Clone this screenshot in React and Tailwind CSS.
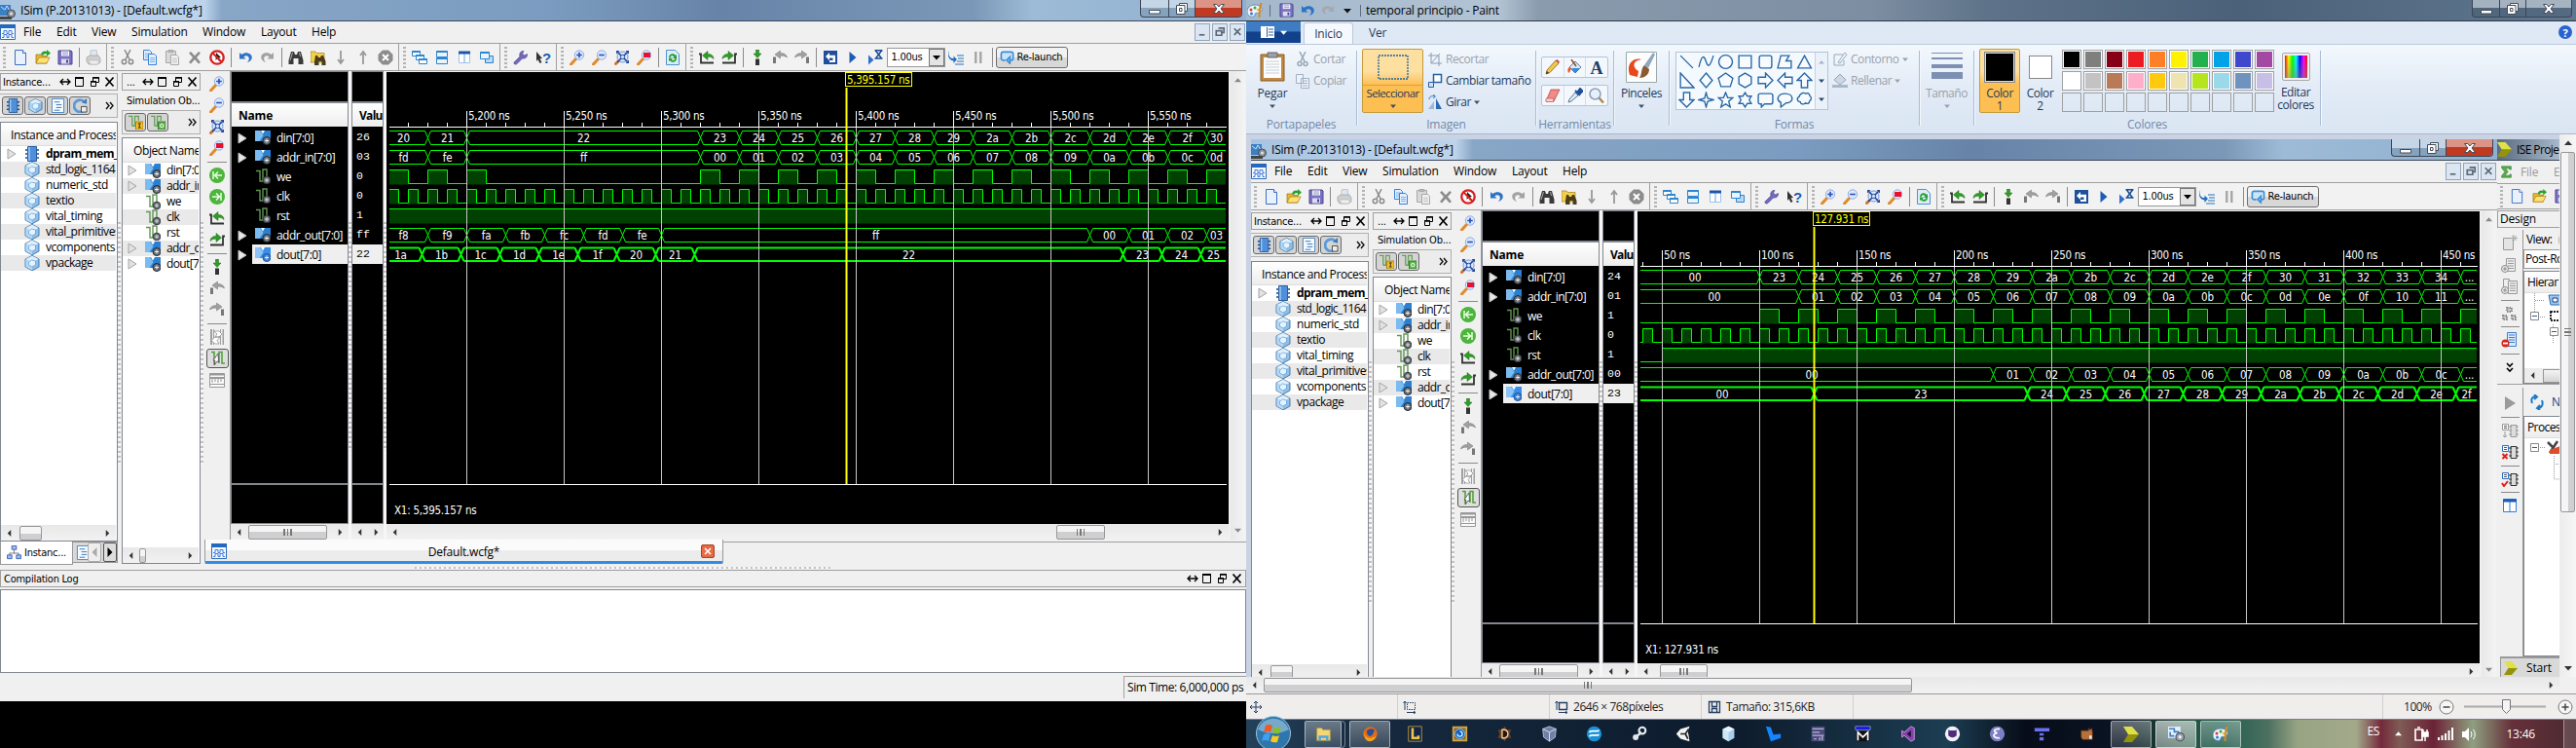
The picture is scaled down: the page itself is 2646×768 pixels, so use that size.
import React from "react";

const SEG = "[font-family:'Open_Sans','Noto_Sans',sans-serif] text-[12px] tracking-[-0.2px] whitespace-nowrap leading-none";
const LST = "[font-family:'Open_Sans','Noto_Sans',sans-serif] text-[12px] tracking-[-0.6px] whitespace-nowrap leading-none";
const RIB = "[font-family:'Open_Sans','Noto_Sans',sans-serif] text-[12px] tracking-[-0.45px] whitespace-nowrap leading-none";
const TAH = "[font-family:'DejaVu_Sans_Condensed','DejaVu_Sans',sans-serif] [font-stretch:condensed] text-[11px] tracking-[-0.25px] whitespace-nowrap leading-none";

/* ---------- icons (16 x 16 grid) ---------- */
const G = "#9a9a9a";
const draw = {
  newdoc: <><path d="M2.500 .5h8l3 3v12h-11z" fill="#e8f1fd" stroke="#3b6fc4" /><path d="M10.500 .5v3h3" fill="#fff" stroke="#3b6fc4" /></>,
  open: <><path d="M1 5h5l1 1.500h5V14H1z" fill="#e8b830" stroke="#9a7412" strokeWidth=".7" /><path d="M1 14l3-6h11l-3 6z" fill="#ffe173" stroke="#a07b14" strokeWidth=".7" /><path d="M6 5c1-3.500 4-4 6-3V0l4 3.500-4 3.500V4.500c-2-.5-3 0-4 1.500z" fill="#27a32b" /></>,
  save: <><path d="M1 1h13l1 1v13H1z" fill="#7a73c4" stroke="#4b468c" /><path d="M4 1.500h8v5H4z" fill="#fff" /><path d="M5 3h6M5 5h6" stroke="#8d8dc0" /><path d="M4 9.500h8v5H4z" fill="#dcdcf2" /><path d="M9 10.500h2v3H9z" fill="#4b468c" /></>,
  print: <><path d="M5 1l6-1 1 7H5z" fill="#dce8f4" stroke="#a8b4c0" strokeWidth=".7" /><path d="M1 8l3-2h9l2 3v4l-3 2H3l-2-3z" fill="#cfcfcf" stroke="#9e9e9e" strokeWidth=".7" /><path d="M3 11l9 0 2 3-3 1H5z" fill="#eee" stroke="#aaa" strokeWidth=".5" /></>,
  cut: <g fill="none" stroke="#8a8a8a" strokeWidth="1.500"><path d="M5 0l5 10M11 0L6 10" /><circle cx="4.500" cy="12.500" r="2.200" /><circle cx="11.500" cy="12.500" r="2.200" /></g>,
  copy: <g stroke="#3d80d0"><path d="M1.500 .5h6l2 2v8h-8z" fill="#e4f0ff" /><path d="M3 4h5M3 6h5M3 8h5" stroke="#7db1ea" /><path d="M6.500 4.500h6l2 2v9h-8z" fill="#e4f0ff" /><path d="M8 8.500h5M8 10.500h5M8 12.500h5" stroke="#7db1ea" /></g>,
  paste: <g stroke="#a8a8a8"><path d="M1.500 1.500h10v12h-10z" fill="#d9d9d9" /><path d="M4 .5h5v2H4z" fill="#bbb" /><path d="M6.500 5.500h6l2 2v8h-8z" fill="#f2f2f2" /><path d="M8 9h5M8 11h5M8 13h5" stroke="#c4c4c4" /></g>,
  del: <path d="M2 3.500l2-1.500 4 4.200L12 2l2 1.500L10 8l4 5-2 1.500L8 10l-4 4.500L2 13l4-5z" fill="#8c8c8c" />,
  noentry: <><circle cx="8" cy="8" r="6.700" fill="#fff" stroke="#d81f1f" strokeWidth="2.300" /><path d="M7 3l5 5-2 .3 1.500 3-1.500.7-1.500-3L6.500 11z" fill="#222" /><path d="M3.500 3.500l9 9" stroke="#d81f1f" strokeWidth="2" /></>,
  undo: <path d="M2 3v6.500h6.500L6.300 7.200C9 5.500 12 6.500 11.800 9.500c-.1 1.600-1 2.600-2 3.500 3.200-.8 5-2.700 5-5.300C14.700 3.500 8.500 1.800 4.200 5z" fill="#2b73c7" />,
  redo: <path d="M14 3v6.500H7.500l2.200-2.300C7 5.500 4 6.500 4.200 9.500c.1 1.600 1 2.600 2 3.500-3.200-.8-5-2.700-5-5.300C1.300 3.500 7.500 1.800 11.800 5z" fill="#a2a2a2" />,
  binoc: <><path d="M3 2h3l1 3h2l1-3h3l2.500 9v4h-5V9h-5v6h-5v-4z" fill="#3a3a3a" /><path d="M4.500 3L2 11M11.500 3l1 4" stroke="#aaa" /></>,
  findf: <><path d="M0 2h5l1.500 1.500H14V13H0z" fill="#f4cf4c" stroke="#a07b14" strokeWidth=".7" /><path d="M5 6h2l1 2h2l1-2h2l2.500 6v4h-4v-4h-3v4H4v-4z" fill="#4a3d1a" /></>,
  down: <path d="M8 1v12M5 10l3 4 3-4" fill="none" stroke={G} strokeWidth="1.800" />,
  up: <path d="M8 15V3M5 6l3-4 3 4" fill="none" stroke={G} strokeWidth="1.800" />,
  stop: <><path d="M5 .5h6L15.500 5v6L11 15.500H5L.5 11V5z" fill="#8c8c8c" /><path d="M5 5l6 6M11 5l-6 6" stroke="#fff" strokeWidth="2" /></>,
  cascade: <g fill="#fff" stroke="#2d86cf"><path d="M.5 1.500h8v5h-8zM4.500 5.500h8v5h-8zM7.500 9.500h8v5h-8z" /><path d="M.5 2h8M4.500 6h8M7.500 10h8" strokeWidth="2" /></g>,
  tileh: <g fill="#eaf4ff" stroke="#2d86cf"><path d="M2.500 1.500h11v6h-11zM2.500 8.500h11v6h-11z" /><path d="M2.500 2h11M2.500 9h11" strokeWidth="2" /></g>,
  tilev: <g fill="#fff" stroke="#9cc4ea"><path d="M2.500 2.500h5.500v11H2.500zM8 2.500h5.500v11H8z" /><path d="M2 3h12" stroke="#1a57a8" strokeWidth="3" /></g>,
  layer: <g fill="#eaf4ff" stroke="#2d86cf"><path d="M6.500 6.500h8v7h-8z" fill="#bcd9f2" /><path d="M1.500 2.500h9v7h-9z" /><path d="M1.500 3h9" strokeWidth="2" /></g>,
  wrench: <path d="M2 15c-1.500-.5-1.500-2 0-3l5-5C6 4 8 1 11 1.500L9.500 4l2 2L14.500 4.500C15 8 12 9.500 9.500 9l-5 5c-1 1-1.500 1.200-2.500 1z" fill="#7169bd" stroke="#474089" strokeWidth=".6" />,
  help: <><path d="M1 2l6 7-2.500.3 2 3.700-2 1-2-4L1 12z" fill="#333" /><text x="7" y="13.500" fontSize="15" fontWeight="bold" fill="#1c5fb0" fontFamily="Liberation Sans">?</text></>,
  zin: <><path d="M6.500 9.500L1.500 15" stroke="#e08a2c" strokeWidth="3" strokeLinecap="round" /><circle cx="10" cy="5.500" r="4.700" fill="#dbe9fd" stroke="#93abe0" /><path d="M10 2.700v5.600M7.200 5.500h5.600" stroke="#2750b8" strokeWidth="1.600" /></>,
  zout: <><path d="M6.500 9.500L1.500 15" stroke="#e08a2c" strokeWidth="3" strokeLinecap="round" /><circle cx="10" cy="5.500" r="4.700" fill="#dbe9fd" stroke="#93abe0" /><path d="M7.200 5.500h5.600" stroke="#2750b8" strokeWidth="1.600" /></>,
  zfit: <><path d="M4 12L1.500 14.500" stroke="#d0732c" strokeWidth="3" strokeLinecap="round" /><circle cx="8.500" cy="7.500" r="5.500" fill="#dbe9fd" stroke="#7290d0" /><path d="M3 2l11 11M14 2L3 13" stroke="#23499c" strokeWidth="1.600" /><circle cx="8.500" cy="7.500" r="2.200" fill="#cfe2fc" stroke="#23499c" /><path d="M2 1h3.500L2 4.500zM15 1h-3.500L15 4.500zM15 14h-3.500L15 10.500z" fill="#23499c" /></>,
  zred: <><path d="M6.500 9.500L1.500 15" stroke="#e08a2c" strokeWidth="3" strokeLinecap="round" /><circle cx="10" cy="5.500" r="4.700" fill="#dbe9fd" stroke="#93abe0" /><path d="M7 3h7v5H7z" fill="#e8102c" /></>,
  refresh: <><path d="M1.500 .5h9l4 4v11h-13z" fill="#dcecfb" stroke="#4f93d2" /><path d="M4 8c0-4 5-5 7-2l1-1v4H8l1.500-1.500C8 5.500 6 6 5.500 8zM12 9c0 4-5 5-7 2l-1 1V8.500h4L6.500 10C8 11.500 10 11 10.500 9z" fill="#23a12b" /></>,
  gleft: <><path d="M0 4.500h2v9h13" fill="none" stroke="#333" strokeWidth="1.800" /><path d="M3.500 6L9 1.500v3c4 0 6 2 6 5-2-2-4-2.500-6-2v3z" fill="#2f9d27" stroke="#1c6b17" strokeWidth=".5" /></>,
  gright: <><path d="M16 4.500h-2v9H1" fill="none" stroke="#333" strokeWidth="1.800" /><path d="M12.500 6L7 1.500v3c-4 0-6 2-6 5 2-2 4-2.500 6-2v3z" fill="#2f9d27" stroke="#1c6b17" strokeWidth=".5" /></>,
  gdown: <><path d="M6.500 0h3v4H12L8 8.500 4 4h2.500z" fill="#2f9d27" stroke="#1c6b17" strokeWidth=".5" /><path d="M6 9.500h4V16H6z" fill="#333" /></>,
  mleft: <><path d="M1 7.500h3V14H1z" fill="#777" /><path d="M3 5L8.500 1v2.500c4 0 6.500 1.500 7 4.500-2-1.500-4-2-7-1.800V9z" fill="#a0a0a0" stroke="#777" strokeWidth=".5" /></>,
  mright: <><path d="M12 7.500h3V14h-3z" fill="#777" /><path d="M13 5L7.500 1v2.500C3.500 3.500 1 5 .5 8c2-1.500 4-2 7-1.800V9z" fill="#a0a0a0" stroke="#777" strokeWidth=".5" /></>,
  restart: <><path d="M1 1h14v14H1z" fill="#1d4f9c" /><path d="M3 7l4-4v2.700h6V13H7v-2h3.500V8.500H7V11z" fill="#fff" /></>,
  play: <path d="M4.500 2l7 6-7 6z" fill="#1d5cb4" />,
  playt: <><path d="M1 5.500l5.500 5-5.500 5z" fill="#2f6fd0" /><path d="M7.500 0.700h8M7.500 9h8M8.500 1l6 8M14.500 1l-6 8" stroke="#174e95" strokeWidth="1.500" /></>,
  step: <><path d="M1 1c-1.500 4 0 8 4.500 8V6.500L9 10l-3.500 4v-2.500C1 11-2 6 1 1z" fill="#2270c0" /><path d="M9 6h7M10 9h6M9 12h7M7 15h9" stroke="#2270c0" /></>,
  pause: <path d="M4 2h2.500v12H4zM9 2h2.500v12H9z" fill="#a8a8a8" />,
  relaunch: <path d="M6 11.500H3.500a2 2 0 0 1-2-2v-5a2 2 0 0 1 2-2h9a2 2 0 0 1 2 2v5a2 2 0 0 1-2 2H11M11 8v7L7.500 11.500z" fill="#cce4f8" stroke="#3c8ed6" strokeWidth="1.800" />,
  gostart: <><circle cx="8" cy="8" r="8" fill="#4db53c" /><path d="M4 4v8M13 8H6M9 4.500L5.500 8 9 11.500" fill="none" stroke="#e8ffe2" strokeWidth="1.500" /></>,
  goend: <><circle cx="8" cy="8" r="8" fill="#4db53c" /><path d="M12 4v8M3 8h7M7 4.500L10.500 8 7 11.500" fill="none" stroke="#e8ffe2" strokeWidth="1.500" /></>,
  swap: <g fill="#a0a0a0"><path d="M1 0h2v16H1zM4 0h1v16H4zM11 0h1v16h-1zM13.500 0H15v16h-1.500z" /><path d="M5 2h5l3 3-3 3H6l2-3zM11 8H6l-4 3.500L6 15h4l-2-3.500z" fill="#fff" stroke="#888" strokeWidth=".7" /></g>,
  snap: <><path d="M2 1.500h3V13h2M10 13V1.500h3V13h3" fill="none" stroke="#4f9e3a" strokeWidth="1.500" /><path d="M9 3L4 10l2 .3L5 15l3-4 1.500.5z" fill="#fff" stroke="#444" strokeWidth=".8" /></>,
  ruler: <><path d="M.5 1.500h15v14H.5z" fill="#fafafa" stroke="#999" /><path d="M.5 2.500h15M.5 6h15" stroke="#999" strokeWidth="2" /><path d="M3 7v4M6 7v3M9 7v4M12 7v3M.5 12.500h15" stroke="#999" /></>,
  chip: <><path d="M1 4h14M1 8h14M1 12h14" stroke="#1b4b86" strokeWidth="1.500" /><path d="M3.500 .5h9v15h-9z" fill="#4f8fdb" stroke="#2c5f9f" /><path d="M5 1v14" stroke="#9cc8f5" strokeWidth="1.500" /></>,
  cube: <><path d="M8 .5L15 4v8l-7 3.800L1 12V4z" fill="#8fbfea" stroke="#40739f" strokeWidth=".9" /><path d="M8 .8L14.500 4 8 7.500 1.500 4z" fill="#dff0ff" /><path d="M8 7.500v8L1.500 12V4z" fill="#b4d8f6" /><path d="M4.500 7l3-2 4 1v4l-3.500 2-3.500-2z" fill="#e4f3ff" stroke="#5f9bd0" strokeWidth=".7" /></>,
  doclist: <><path d="M1.500 .5h13v15h-13z" fill="#f6fbff" stroke="#4a84bd" /><path d="M4 4h6M6 7h6M6 10h6M4 13h6" stroke="#3672b5" /></>,
  circ: <><path d="M12 3.500A6.500 6.500 0 1 0 13 12" fill="none" stroke="#5a9bd8" strokeWidth="3" /><path d="M9.500 4.500L15 6V0z" fill="#3c7cbc" /><path d="M9 9h6v6H9z" fill="#eee" stroke="#444" /></>,
  sigI: <><path d="M0 1.500h4V12M4 12h3V1.500h4V6" fill="none" stroke="#6aa05a" strokeWidth="1.400" /><path d="M8 7.500h8V16H8z" fill="#f8c224" stroke="#a87b10" /><path d="M10.500 9.500h3M12 9.500v4M10.500 13.800h3" stroke="#222" /></>,
  sigO: <><path d="M0 1.500h4V12M4 12h3V1.500h4V6" fill="none" stroke="#6aa05a" strokeWidth="1.400" /><path d="M8 7.500h8V16H8z" fill="#5dbb4b" stroke="#2d7a22" /><circle cx="12" cy="11.800" r="1.800" fill="none" stroke="#fff" /></>,
  bus: <><path d="M0 1h16v11H0z" fill="#2a7fd0" /><path d="M0 1h5l3.500 5-4 6H0z" fill="#7bbcf0" /><path d="M6 1h4L8 4.500z" fill="#fff" /><circle cx="12" cy="11.500" r="4" fill="#6b6f78" stroke="#222831" /><path d="M12 9.500v4M10 11.500h4" stroke="#eee" /></>,
  bussel: <><path d="M0 1h16v11H0z" fill="#3a8fe8" /><path d="M0 1h5l3.500 5-4 6H0z" fill="#8cc4f8" /><path d="M6 1h4L8 4.500z" fill="#fff" /><circle cx="12" cy="11.500" r="4" fill="#3f7fd0" stroke="#1e56a0" /><path d="M12 9.500v4M10 11.500h4" stroke="#dcecff" /></>,
  sig: <><path d="M1 2.500h4V13h3V1h4v8" fill="none" stroke="#5f9550" strokeWidth="1.400" /><circle cx="12" cy="12" r="3.800" fill="#6b6f78" stroke="#33363c" /><path d="M12 10v4M10 12h4" stroke="#ddd" /></>,
  wcfg: <><path d="M.5 .5h15v15H.5z" fill="#f4faff" stroke="#2f6bb5" /><path d="M0 0h16v4H0z" fill="#2469bd" /><path d="M2 9.500h2V6.500h3v3h2v-3h3v3h2M2 13.500h2v-3h3v3h2v-3h3v3h2" fill="none" stroke="#4379d8" /></>,
  isim: <><path d="M0 1h11v11H0z" fill="#3b7fc4" /><path d="M1 3l4 3 2-4 3 5" stroke="#bfe2ff" fill="none" /><circle cx="11.500" cy="10" r="4" fill="#8b9099" stroke="#454a52" /><circle cx="11.500" cy="10" r="1.600" fill="#ddd" /><path d="M0 13h12v3H0z" fill="#444" /></>,
  isimBig: <><path d="M0 1h12v11H0z" fill="#e6f1fb" /><path d="M1 3h5v3h4v4M2 6v4h4" stroke="#3b7fc4" strokeWidth="1.500" fill="none" /><circle cx="11.500" cy="11" r="4" fill="#9aa0a8" stroke="#454a52" /><circle cx="11.500" cy="11" r="1.600" fill="#eee" /></>,
  tree: <g stroke="#3b62b5"><path d="M8 5v4M3 11V8.500h10V11" fill="none" stroke="#777" /><path d="M5.500 .5h5v4h-5zM.5 10.500h5v4h-5zM10.500 10.500h5v4h-5z" fill="#9fbdf2" /></g>,
  sigma: <path d="M2 1h12v4h-2L11 3.500H7L10 8l-4 4.500h5L13 11h1v4H2v-2l4-5-4-5z" fill="#5aae4c" stroke="#26742b" strokeWidth=".7" />,
  chev: <><path d="M0 0h9l7 8H5z" fill="#dfe04a" /><path d="M0 16h9l7-8H5z" fill="#93930c" /></>,
  palette: <><path d="M8 2C3 2 0 5 0 9s4 6 7 5c2-.7 0-3 2-3.500s5 .5 6-3S12 2 8 2z" fill="#eef4fb" stroke="#5b8dbd" /><circle cx="4" cy="7" r="1.500" fill="#e03c31" /><circle cx="8" cy="5" r="1.500" fill="#37a837" /><circle cx="4.500" cy="11" r="1.500" fill="#2c79d6" /><circle cx="11" cy="7" r="1.300" fill="#f2c029" /><path d="M14.500 0L13 6l-.5 9" stroke="#d78a26" strokeWidth="2" /></>,
};
const I = ({ n, s = 16, c = "" }) => (
  <svg viewBox="0 0 16 16" width={s} height={s} fill="none" className={"shrink-0 " + c}>{draw[n]}</svg>
);

const Slot = ({ n, s }) => <div className="flex w-[23px] shrink-0 justify-center"><I n={n} s={s || 16} /></div>;
const Sep = () => <div className="flex w-[6px] shrink-0 justify-center"><div className="h-5 w-px bg-[#8a8a8a]" /></div>;
const Grip = () => <div className="h-[22px] w-[3px] shrink-0 bg-[repeating-linear-gradient(to_bottom,#b4b4b4_0px,#b4b4b4_2px,#f0f0f0_2px,#f0f0f0_4px)]" />;
const Break = () => <div className="flex w-3 shrink-0 items-center gap-1"><div className="ml-px h-[28px] w-px bg-[#a0a0a0]" /><Grip /></div>;
const DotsV = ({ h = "h-[250px]" }) => (
  <div className="w-[4px] shrink-0 pt-[155px]">
    <div className={"w-[3px] bg-[repeating-linear-gradient(to_bottom,#c2c2c2_0px,#c2c2c2_2px,#fafafa_2px,#f0f0f0_5px)] " + h} />
  </div>
);

const Tri = ({ d = "r", c = "#333", s = 5, cls = "" }) => (
  <svg width={s + 2} height={s + 2} viewBox="0 0 8 8" className={"shrink-0 " + cls}>
    <path fill={c} d={{ r: "M2 0l4 4-4 4z", l: "M6 0L2 4l4 4z", d: "M0 2h8L4 6.500z", u: "M0 6h8L4 1.500z" }[d]} />
  </svg>
);
/* expander in front of tree rows */
const Exp = ({ light, cls = "" }) => (
  <svg width="10" height="12" viewBox="0 0 10 12" className={"shrink-0 " + cls}>
    <path d="M1 1l8 5-8 5z" fill={light ? "#e2e2e2" : "#e8e8e8"} stroke={light ? "#a4a4a4" : "#bdbdbd"} />
  </svg>
);
const Thumb = ({ w, grip }) => (
  <div className="flex h-[15px] shrink-0 items-center justify-center gap-px rounded-[2px] border border-[#979797] bg-linear-to-b from-[#f5f5f5] from-50% to-[#cfcfd2] to-50%" style={{ width: w }}>
    {grip && [0, 1, 2].map((i) => <div key={i} className="mx-[0.5px] h-[7px] w-[1.500px] bg-[#777]" />)}
  </div>
);
const HScroll = ({ lead, w, grip, cls = "" }) => (
  <div className={"flex h-[16px] items-center bg-linear-to-b from-[#e8e8e8] to-[#f2f2f2] " + cls}>
    <div className="flex w-[17px] shrink-0 justify-center"><Tri d="l" /></div>
    {w ? <><div style={{ width: lead }} className="shrink-0" /><Thumb w={w} grip={grip} /></> : null}
    <div className="ml-auto flex w-[17px] shrink-0 justify-center"><Tri /></div>
  </div>
);

const DockBtns = () => (
  <svg width="57" height="12" viewBox="0 0 57 12" className="ml-auto shrink-0" fill="none" stroke="#000">
    <path d="M2 6h8M4 3L1 6l3 3M8 3l3 3-3 3" strokeWidth="1.300" />
    <path d="M16.500 1.500h8v9h-8z" /><path d="M16 2h9" strokeWidth="2" />
    <path d="M34.500 1.500h6v5h-6z" fill="#f0f0f0" /><path d="M34 2h7" strokeWidth="1.500" />
    <path d="M32.500 5.500h5v5h-5z" fill="#f0f0f0" /><path d="M32 6h6" strokeWidth="1.500" />
    <path d="M47.500 1.500l8 9M55.500 1.500l-8 9" strokeWidth="1.700" />
  </svg>
);
const Pressed = ({ n }) => (
  <div className="flex h-[19px] w-[22px] items-center justify-center rounded-[3px] border-[1.500px] border-[#6a6a6a] bg-[#d4d4d4]"><I n={n} s={15} /></div>
);
const More = () => <svg width="9" height="9" viewBox="0 0 9 9" className="ml-auto mr-[3px] shrink-0"><path d="M1 1l3 3.500L1 8M5 1l3 3.500L5 8" fill="none" stroke="#111" strokeWidth="1.400" /></svg>;

/* window caption buttons */
const Caption = ({ red, w1 = 29, w2 = 27, w3 = 47 }) => (
  <div className="ml-auto flex h-[18px] self-start overflow-hidden rounded-b-[4px] border border-t-0 border-[#3c4654] bg-linear-to-b from-white/45 from-50% to-black/10 to-50%">
    {[w1, w2, w3].map((w, i) => (
      <div key={i} style={{ width: w }} className={"flex items-center justify-center " + (i < 2 ? "border-r border-[#3c4654] " : red ? "bg-linear-to-b from-[#dc9486] from-45% to-[#c03a22] to-50%" : "")}>
        <svg width="14" height="12" viewBox="0 0 14 12" fill="none">
          {i === 0 && <path d="M1.500 7.500h11v3.500h-11z" fill="#fff" stroke="#444c58" />}
          {i === 1 && <><path d="M4.500 .5h8v8h-8z" fill="#fff" stroke="#444c58" /><path d="M1.500 2.500h8.500v9H1.500z" fill="#fff" stroke="#444c58" /><path d="M4.500 5.500h2.500v3H4.500z" stroke="#444c58" /></>}
          {i === 2 && <path d="M1.500 1.500h3.300L7 4l2.200-2.500h3.300L9 6l3.500 4.500H9.200L7 8l-2.200 2.500H1.500L5 6z" fill="#fff" stroke="#444c58" />}
        </svg>
      </div>
    ))}
  </div>
);

/* ---------- wave form ---------- */
const X0 = 3, XE = 862;
const BusRow = ({ y, segs, thick }) => {
  const top = y, bot = y + 14 - (thick ? 0.5 : 0);
  let d = "";
  segs.forEach(([a, b], i) => {
    const s = Math.max(a, X0) + (a > X0 ? 3 : 0), e = b >= XE ? XE : b - 3;
    d += `M${s} ${top}H${e}M${s} ${bot}H${e}`;
    if (i > 0) d += `M${a - 3} ${top}L${a + 3} ${bot}M${a + 3} ${top}L${a - 3} ${bot}`;
  });
  return (
    <g>
      <path d={d} stroke="#00ff00" strokeWidth={thick ? 2 : 1} fill="none" />
      {segs.map(([a, b, v], i) => (
        <text key={i} x={(a + b) / 2} y={y + 11} textAnchor="middle" fill="#fff" fontSize="11.500" letterSpacing="-0.2">{v}</text>
      ))}
    </g>
  );
};
const DigRow = ({ y, highs }) => {
  let d = "", last = X0;
  highs.forEach(([a, b]) => {
    const s = Math.max(a, X0), e = Math.min(b, XE);
    if (s > last) d += `M${last} ${y + 14}H${s}`;
    if (a > X0) d += `M${s} ${y + 14}V${y}`; else d += `M${s} ${y}`;
    d += `H${e}`;
    if (b < XE) d += `V${y + 14}`;
    last = e;
  });
  if (last < XE) d += `M${last} ${y + 14}H${XE}`;
  return (
    <g>
      {highs.map(([a, b], i) => { const s = Math.max(a, X0); return <rect key={i} x={s} y={y} width={Math.min(b, XE) - s} height="15" fill="#004000" />; })}
      <path d={d} stroke="#00ff00" fill="none" />
    </g>
  );
};
const seq = (from, n, start, step = 40) =>
  Array.from({ length: n }, (_, i) => [start + i * step, start + (i + 1) * step, (from + i).toString(16).padStart(2, "0")]);
const pulses = (start, end, step, w) => {
  const r = [];
  for (let x = start; x < end; x += step) r.push([x, x + w]);
  return r;
};

/* coordinates are relative to the canvas, whose left edge shows x = 397 of the window */
const L = (x) => x - 397 + 0.5;
const shift = (a) => a.map(([s, e, v]) => [L(s), L(e), v]);
const waves = {
  a: {
    grid: [479, 579, 679, 779, 879, 979, 1079, 1179], labels: ["5,200 ns", "5,250 ns", "5,300 ns", "5,350 ns", "5,400 ns", "5,450 ns", "5,500 ns", "5,550 ns"],
    first: 419, cursor: 869, cl: "5,395.157 ns", cw: 68,
    din: shift([[389, 439, "20"], [439, 479, "21"], [479, 719, "22"], ...seq(0x23, 13, 719), [1239, 1259, "30"]]),
    ain: shift([[389, 439, "fd"], [439, 479, "fe"], [479, 719, "ff"], ...seq(0, 13, 719), [1239, 1259, "0d"]]),
    we: shift([[399, 419], [439, 459], [479, 499], ...pulses(719, 1259, 40, 20)]),
    clk: shift(pulses(399, 1259, 20, 10)),
    rst: shift([[390, 1265]]),
    aout: shift([[389, 439, "f8"], ...seq(0xf9, 6, 439), [679, 1119, "ff"], ...seq(0, 3, 1119), [1239, 1259, "03"]]),
    dout: shift([[389, 433, "1a"], ...seq(0x1b, 5, 433), [633, 673, "20"], [673, 713, "21"], [713, 1153, "22"], [1153, 1193, "23"], [1193, 1233, "24"], [1233, 1259, "25"]]),
    vals: ["26", "03", "0", "0", "1", "ff", "22"], lead: 671, thumb: 50,
  },
  b: {
    grid: [422, 522, 622, 722, 822, 922, 1022, 1122, 1222], labels: ["50 ns", "100 ns", "150 ns", "200 ns", "250 ns", "300 ns", "350 ns", "400 ns", "450 ns"],
    first: 402, cursor: 578, cl: "127.931 ns", cw: 58,
    din: shift([[389, 522, "00"], ...seq(0x23, 18, 522), [1242, 1260, "..."]]),
    ain: shift([[389, 562, "00"], ...seq(1, 17, 562), [1242, 1260, "..."]]),
    we: shift(pulses(522, 1259, 40, 20)),
    clk: shift(pulses(402, 1259, 20, 10)),
    rst: shift([[422, 1265]]),
    aout: shift([[389, 762, "00"], ...seq(1, 12, 762), [1242, 1260, "..."]]),
    dout: shift([[389, 578, "00"], [578, 797, "23"], ...seq(0x24, 11, 797), [1237, 1259, "2f"]]),
    vals: ["24", "01", "1", "0", "1", "00", "23"], lead: 6, thumb: 49,
  },
};
const Wave = ({ w }) => {
  const ticks = [];
  for (let x = w.first; x < 1259; x += 20) ticks.push(x);
  return (
    <svg width="865" height="464" viewBox="0 0 865 464" className={"block bg-black " + TAH}>
      <g transform="translate(0,-74)">
        <path d={ticks.map((x) => `M${L(x)} 126V130`).join("")} stroke="#fff" />
        <path d="M3 130.500H863M3 497.500H863" stroke="#fff" />
        {w.grid.map((x, i) => <text key={x} x={L(x) + 1.500} y="122.500" fill="#fff" fontSize="11.500" letterSpacing="-0.3">{w.labels[i]}</text>)}
        <BusRow y={134.5} segs={w.din} /><BusRow y={154.5} segs={w.ain} />
        <DigRow y={174.5} highs={w.we} /><DigRow y={194.5} highs={w.clk} /><DigRow y={214.5} highs={w.rst} />
        <BusRow y={234.5} segs={w.aout} /><BusRow y={254.5} segs={w.dout} thick />
        <path d={w.grid.map((x) => `M${L(x)} 131V497`).join("")} stroke="#c8c8c8" />
        <path d={w.grid.map((x) => `M${L(x)} 114V130`).join("")} stroke="#fff" />
        <rect x={L(w.cursor) - 1} y="74.500" width={w.cw} height="14" fill="#000" stroke="#ff0" />
        <text x={L(w.cursor) + 0.5} y="85.500" fill="#ff0" fontSize="11.500" letterSpacing="-0.3">{w.cl}</text>
        <path d={`M${L(w.cursor)} 90V497`} stroke="#ff0" strokeWidth="2" />
        <text x="8" y="527.500" fill="#fff" fontSize="11.500" letterSpacing="-0.25">X1: {w.cl}</text>
      </g>
    </svg>
  );
};

const nameRows = [["bus", "din[7:0]"], ["bus", "addr_in[7:0]"], ["sig", "we"], ["sig", "clk"], ["sig", "rst"], ["bus", "addr_out[7:0]"], ["bus", "dout[7:0]"]];
const instRows = ["std_logic_1164", "numeric_std", "textio", "vital_timing", "vital_primitives", "vcomponents", "vpackage"];
const HEAD = "flex shrink-0 items-center bg-linear-to-b from-white to-[#ededed]";

const ISim = ({ w }) => (
  <div className="flex h-[720px] w-[1280px] shrink-0 flex-col overflow-hidden bg-[#f0f0f0] text-black">
    <div className="flex h-[22px] shrink-0 items-center border-b border-[#3b4a5c] bg-[linear-gradient(90deg,#a9c4e0_0px,#bdd4ec_210px,#88a6c6_228px,#7b9cc0_560px,#6784a8_740px,#7c98b8_1000px,#9dbbd6_1060px,#8fb0d0_1280px)]">
      <I n="isim" c="mt-0.5" />
      <div className={SEG + " ml-[5px]"}>ISim (P.20131013) - [Default.wcfg*]</div>
      <Caption red />
      <div className="w-1" />
    </div>
    <div className="flex h-[22px] shrink-0 items-center">
      <I n="wcfg" />
      <div className={SEG + " ml-2 flex flex-1"}>
        <div className="w-[34px]">File</div><div className="w-[36px]">Edit</div><div className="w-[41px]">View</div>
        <div className="w-[73px]">Simulation</div><div className="w-[60px]">Window</div><div className="w-[52px]">Layout</div><div>Help</div>
      </div>
      <div className="flex gap-0.5 pr-px">
        {["M4 11h6", "M6 3.500h6v5h-2M3.500 6.500h6v5h-6z", "M4 4l7 7M11 4l-7 7"].map((d) => (
          <div key={d} className="h-[18px] w-[16px] border border-[#8fa5c0] bg-[#dce6f2]"><svg viewBox="0 0 15 16" width="14" height="16"><path d={d} fill="none" stroke="#5a6878" strokeWidth="1.800" /></svg></div>
        ))}
      </div>
    </div>
    <div className="flex h-[29px] shrink-0 items-center border-y border-[#a0a0a0] bg-[#f2f2f2] pl-[3px]">
      <Grip /><div className="w-[3.500px] shrink-0" />
      <Slot n="newdoc" /><Slot n="open" /><Slot n="save" /><Sep /><Slot n="print" /><Break />
      <Slot n="cut" /><Slot n="copy" /><Slot n="paste" /><Slot n="del" /><Slot n="noentry" /><Sep />
      <Slot n="undo" /><Slot n="redo" /><Sep /><Slot n="binoc" /><Slot n="findf" /><Slot n="down" /><Slot n="up" /><Slot n="stop" /><Break />
      <Slot n="cascade" /><Slot n="tileh" /><Slot n="tilev" /><Slot n="layer" /><Break />
      <Slot n="wrench" /><Slot n="help" /><Break />
      <Slot n="zin" /><Slot n="zout" /><Slot n="zfit" /><Slot n="zred" /><Sep /><Slot n="refresh" /><Break />
      <Slot n="gleft" /><Slot n="gright" /><Sep /><Slot n="gdown" /><Slot n="mleft" /><Slot n="mright" /><Sep />
      <Slot n="restart" /><Slot n="play" /><Slot n="playt" />
      <div className="flex h-[20px] w-[60px] shrink-0 items-center border border-[#999] bg-white pl-1">
        <div className={TAH + " flex-1 tracking-[-0.5px]"}>1.00us</div>
        <div className="flex h-[18px] w-[16px] items-center justify-center border border-[#777] bg-[#e4e4e4]"><Tri d="d" c="#000" s={6} /></div>
      </div>
      <Slot n="step" /><Slot n="pause" /><Sep />
      <div className="flex h-[22px] w-[74px] shrink-0 items-center rounded-[3px] border border-[#707070] bg-linear-to-b from-[#f2f2f2] from-50% to-[#d8d8d8] to-50% pl-[3px]">
        <I n="relaunch" s={15} /><div className={TAH + " ml-[3px] tracking-[-0.5px]"}>Re-launch</div>
      </div>
    </div>

    <div className="flex h-[507px] shrink-0">
      {/* instances dock */}
      <div className="flex w-[121px] shrink-0 flex-col pt-[2px]">
        <div className="flex h-[18px] items-center border border-[#a0a0a0] pl-0.5 pr-0.5"><div className={TAH + " tracking-[-0.4px]"}>Instance...</div><DockBtns /></div>
        <div className="mt-[3px] flex h-[25px] items-center gap-px border border-l-0 border-[#b0b0b0] bg-[#ececec] pl-0.5">
          <Pressed n="chip" /><Pressed n="cube" /><Pressed n="doclist" /><Pressed n="circ" /><More />
        </div>
        <div className="mt-[4px] flex h-[431px] flex-col overflow-hidden border border-[#828790] bg-white pr-px">
          <div className={HEAD + " h-[24px] overflow-hidden border-b border-[#ddd] pl-2.5 pt-[2px] " + SEG}><span className="tracking-[-0.4px]">Instance and Processes</span></div>
          <div className="flex h-4 items-center"><Exp light cls="ml-[6px]" /><I n="chip" c="ml-[8px]" /><div className={LST + " ml-[6px] text-[11.500px] font-bold"}>dpram_mem_t</div></div>
          {instRows.map((r, i) => (
            <div key={r} className={"flex h-4 items-center overflow-hidden pl-[24px] " + (i % 2 ? "bg-white" : "bg-[#e9e9e9]")}><I n="cube" /><div className={LST + " ml-[6px] " + (i === 0 ? "tracking-[-0.7px]" : "tracking-[-0.45px]")}>{r}</div></div>
          ))}
          <HScroll lead={2} w={23} cls="mt-auto shrink-0" />
        </div>
        <div className="flex h-[24px] items-center">
          <div className="flex h-full w-[75px] items-center border border-t-0 border-[#999] bg-white pl-1.5"><I n="tree" s={15} /><div className={TAH + " ml-[3px]"}>Instanc...</div></div>
          <div className="flex h-[22px] flex-1 items-center self-start border border-l-0 border-[#999] bg-[#d8d8d8] pl-[3px]">
            <div className="w-[12px] shrink-0 overflow-hidden"><I n="doclist" s={15} /></div>
            <div className="flex h-[20px] w-[14px] items-center justify-center rounded-[2px] border border-[#aaa] bg-[#eee]"><Tri d="l" c="#aaa" s={8} /></div>
            <div className="ml-[2px] flex h-[20px] w-[14px] items-center justify-center rounded-[2px] border border-[#555] bg-[#ddd]"><Tri c="#000" s={8} /></div>
          </div>
        </div>
      </div>
      <DotsV />
      {/* objects dock */}
      <div className="flex w-[81px] shrink-0 flex-col pt-[2px]">
        <div className="flex h-[18px] items-center border border-[#a0a0a0] pl-1 pr-0.5"><div className={TAH}>...</div><DockBtns /></div>
        <div className="flex h-[20px] items-center overflow-hidden pl-[5px]"><div className={TAH + " tracking-[-0.5px]"}>Simulation Ob...</div></div>
        <div className="flex h-[25px] items-center gap-px border border-[#b0b0b0] bg-[#ececec] pl-0.5">
          <Pressed n="sigI" /><Pressed n="sigO" /><More />
        </div>
        <div className="mt-[3px] flex h-[438px] flex-col overflow-hidden border border-[#828790] bg-white pr-px">
          <div className={HEAD + " h-[25px] overflow-hidden border-b border-[#ddd] pl-[11px] pt-px " + SEG}><span className="tracking-[-0.4px]">Object Name</span></div>
          {nameRows.map(([ic, n], i) => (
            <div key={n} className={"flex h-4 items-center overflow-hidden " + (i % 2 ? "bg-[#e9e9e9]" : "bg-white")}>
              <div className="w-[23px] shrink-0 pl-[5px]">{ic === "bus" && <Exp light />}</div><I n={ic} /><div className={LST + " ml-[6px]"}>{n}</div>
            </div>
          ))}
          <HScroll lead={0} w={7} cls="mt-auto shrink-0" />
        </div>
      </div>
      <DotsV />
      {/* wave editor */}
      <div className="flex w-[1070px] shrink-0 flex-col">
        <div className="flex h-[481px]">
          <div className="flex w-[27px] shrink-0 flex-col items-center border-r border-[#999] pt-[2px]">
            {["zin", "zout", "zfit", "zred", "-", "gostart", "goend", "gleft", "gright", "-", "gdown", "mleft", "mright", "-", "swap", "!snap", "ruler"].map((n, i) =>
              n === "-" ? <div key={i} className="flex h-[6px] items-center"><div className="h-px w-5 bg-[#8a8a8a]" /></div>
                : <div key={i} className="flex h-[22px] items-center">
                  {n[0] === "!" ? <div className="flex h-[20px] w-[23px] items-center justify-center rounded-[3px] border-[1.500px] border-[#555] bg-[#dedede]"><I n="snap" /></div> : <I n={n} />}
                </div>)}
          </div>
          {/* names */}
          <div className="flex w-[121px] shrink-0 flex-col">
            <div className="flex h-[465px] flex-col border border-[#828790] bg-black">
              <div className="h-[32px] shrink-0 border-b-2 border-[#828790]" />
              <div className={HEAD + " mb-px h-[24px] pl-[7px] pt-[2px] font-bold " + SEG}>Name</div>
              {nameRows.map(([ic, n], i) => (
                <div key={n} className="flex h-5 shrink-0 items-center">
                  <div className="flex w-[21px] shrink-0 justify-center pt-[2px]">{ic === "bus" && <Exp />}</div>
                  <div className={"flex h-5 flex-1 items-center pl-[3px] " + (i === 6 ? "bg-[#efefef] text-black" : "text-white")}><I n={i === 6 ? "bussel" : ic} /><div className={LST + " ml-[6px] pt-px tracking-[-0.55px]"}>{n}</div></div>
                </div>
              ))}
              <div className="h-[227px] shrink-0 border-b-2 border-[#828790]" />
            </div>
            <HScroll lead={1} w={81} grip />
          </div>
          <div className="w-[3px] shrink-0 bg-[#f6f6f6] pt-[155px]"><div className="h-[235px] w-[3px] bg-[repeating-linear-gradient(to_bottom,#c2c2c2_0px,#c2c2c2_2px,#fafafa_2px,#f0f0f0_5px)]" /></div>
          <div className="flex w-[33px] shrink-0 flex-col">
            <div className="flex h-[465px] flex-col overflow-hidden border border-[#828790] bg-black">
              <div className="h-[32px] shrink-0 border-b-2 border-[#828790]" />
              <div className={HEAD + " mb-px h-[24px] overflow-hidden pl-[7px] pt-[2px] font-bold " + SEG}><span className="tracking-[-0.7px]">Valu</span></div>
              {w.vals.map((v, i) => (
                <div key={i} className={"flex h-5 shrink-0 items-center pl-[4px] [font-family:'Liberation_Mono',monospace] text-[11.500px] leading-none " + (i === 6 ? "bg-[#efefef] text-black" : "text-white")}>{v}</div>
              ))}
              <div className="h-[227px] shrink-0 border-b-2 border-[#828790]" />
            </div>
            <HScroll />
          </div>
          <div className="w-[3px] shrink-0 bg-[#f6f6f6] pt-[155px]"><div className="h-[235px] w-[3px] bg-[repeating-linear-gradient(to_bottom,#c2c2c2_0px,#c2c2c2_2px,#fafafa_2px,#f0f0f0_5px)]" /></div>
          <div className="w-[865px] shrink-0 pt-px">
            <Wave w={w} />
            <HScroll lead={w.lead} w={w.thumb} grip />
          </div>
          <div className="ml-[2px] flex w-[15px] flex-col items-center justify-between bg-linear-to-r from-[#e8e8e8] to-[#f4f4f4] py-[6px]"><Tri d="u" c="#888" /><Tri d="d" c="#888" /></div>
        </div>
        <div className="flex h-[26px]">
          <div className="flex h-[25px] w-[533px] items-center rounded-b-[2px] border border-t-0 border-b-[3px] border-[#999] border-b-[#2f8ceb] bg-linear-to-b from-[#fbfbfb] from-50% to-[#ececec] to-50% pl-1.5 pr-2 pt-[2px]">
            <I n="wcfg" />
            <div className={SEG + " flex-1 pt-px text-center"}>Default.wcfg*</div>
            <div className="flex h-[14px] w-[14px] items-center justify-center rounded-[2px] border border-[#a8431f] bg-[#e86a44]"><svg width="8" height="8"><path d="M1 1l6 6M7 1L1 7" stroke="#fff" strokeWidth="1.600" /></svg></div>
          </div>
          <div className="mt-[2px] h-px flex-1 bg-[#a0a0a0]" />
        </div>
      </div>
    </div>

    <div className="flex h-[5px] shrink-0 items-center justify-center"><div className="h-[2px] w-[428px] bg-[repeating-linear-gradient(to_right,#c2c2c2_0px,#c2c2c2_2px,#fafafa_2px,#f0f0f0_5px)]" /></div>
    <div className="flex h-[18px] shrink-0 items-center border border-[#a0a0a0] px-[3px]"><div className={TAH + " tracking-[-0.4px]"}>Compilation Log</div><DockBtns /></div>
    <div className="mt-[2px] h-[86px] shrink-0 border border-[#828790] bg-white" />
    <div className="flex h-[29px] shrink-0 justify-end pt-[3px]">
      <div className={SEG + " flex h-[23px] w-[126px] items-center border-l border-t border-[#a0a0a0] pl-[3px]"}><span className="tracking-[-0.4px]">Sim Time: 6,000,000 ps</span></div>
    </div>
  </div>
);

/* ---------- ISE window sliver ---------- */
const gdoc = <><path d="M5.500 1.500h9v13h-9z" fill="#eee" stroke="#999" /><path d="M7 4h6M7 6.500h6M7 9h6M7 11.500h6" stroke="#999" /></>;
const Mini = ({ k }) => (
  <svg width="18" height="16" viewBox="0 0 18 16" fill="none">
    {k === "star" && <><path d="M2.500 3.500h10v12h-10z" fill="#e4e4e4" stroke="#999" /><path d="M13 0v7M10 3.500h7M11 1l5 5M16 1l-5 5" stroke="#aaa" /></>}
    {k === "doc" && <>{gdoc}<circle cx="4" cy="12" r="3.500" fill="#eee" stroke="#888" /><path d="M4 10v4M2 12h4" stroke="#888" /></>}
    {k === "docs" && <><path d="M2.500 .5h6v9h-6z" fill="#eee" stroke="#999" /><g transform="translate(2,1)">{gdoc}</g><circle cx="4" cy="12" r="3.500" fill="#eee" stroke="#888" /><path d="M4 10v4M2 12h4" stroke="#888" /></>}
    {k === "boxes" && <g stroke="#888" strokeWidth="2" strokeDasharray="1.500 1"><path d="M6 2h5v4H6zM2 10h4v4H2zM11 10h4v4h-4z" fill="#ccc" /></g>}
    {k === "red" && <><path d="M6.500 .5h9v14h-9z" fill="#dbeafc" stroke="#3f7fca" /><path d="M8 3h6M8 5.500h6M8 8h6M8 10.500h6" stroke="#3f7fca" /><circle cx="4.500" cy="11.500" r="4" fill="#d8271c" /><path d="M2 11.500h5" stroke="#fff" strokeWidth="1.800" /></>}
    {k === "chevs" && <path d="M6 4l3 3 3-3M6 9l3 3 3-3" stroke="#000" strokeWidth="1.600" />}
    {k === "play" && <path d="M4 1l11 7-11 7z" fill="#9a9a9a" />}
    {k[0] === "c" && k.length === 2 && <><path d="M1.500 1.500h6v6h-6z" fill="#fff" stroke={k === "c0" ? "#999" : "#2d6fc0"} /><path d="M3 3.500h3M3 5.500h3" stroke="#555" /><path d="M10 2.500h6v12h-6zM8 4h3M8 8h3M8 12h3M15 4h3M15 8h3M15 12h3" fill="#ddd" stroke={k === "c0" ? "#999" : "#333"} />
      {k === "c0" && <path d="M4 9v6M2 13l2 2 2-2" stroke="#999" />}{k === "c1" && <path d="M1.500 10l5 5M6.500 10l-5 5" stroke="#e02020" strokeWidth="2" />}{k === "c2" && <path d="M1 12l2 3 4-5" stroke="#e02020" strokeWidth="2" />}</>}
    {k === "tbl" && <><path d="M2.500 1.500h13v13h-13zM9 4v10" fill="#fff" stroke="#2f7fd6" /><path d="M2 3h14" stroke="#1d5cb4" strokeWidth="3" /></>}
    {k === "re" && <path d="M4 9C2 4 5 2 8 2M6 0l3 2.500L6 5M14 6c2 5-1 8-4 8M12 11l-3 3 3 2" stroke="#1d78c8" strokeWidth="2" />}
  </svg>
);
const Strip = ({ items }) => items.map((k, i) => k === "-" ? <div key={i} className="my-[2px] h-px w-[19px] shrink-0 bg-[#8a8a8a]" /> : <div key={i} className="flex h-[22.500px] shrink-0 items-center"><Mini k={k} /></div>);
const ISE = () => (
  <div className="flex h-[552px] w-[64px] shrink-0 flex-col overflow-hidden bg-[#f0f0f0]">
    <div className="flex h-[22px] shrink-0 items-center border-b border-[#3b4a5c] bg-linear-to-r from-[#5b6c80] to-[#a9b9cb]"><I n="chev" s={15} /><div className={LST + " ml-[5px] tracking-[-0.4px]"}>ISE Proje</div></div>
    <div className={SEG + " flex h-[23px] shrink-0 items-center text-[#9a9a9a]"}><I n="sigma" s={13} c="ml-[3px]" /><div className="ml-2 w-[34px] shrink-0">File</div>E</div>
    <div className="flex h-[27px] shrink-0 items-center border-y border-[#a0a0a0] pl-[3px]"><Grip /><div className="w-[3px] shrink-0" /><Slot n="newdoc" s={15} /><Slot n="open" s={15} /><Slot n="save" s={15} /></div>
    <div className="mt-px flex h-[18px] shrink-0 items-center border border-r-0 border-[#a0a0a0] pl-0.5"><div className={SEG}>Design</div></div>
    <div className="mt-[2px] flex h-[159px] shrink-0 border-b border-[#a0a0a0]">
      <div className="flex w-[27px] shrink-0 flex-col items-center border-r border-[#999] pt-[2px]"><Strip items={["star", "doc", "docs", "-", "boxes", "-", "red", "-", "chevs"]} /></div>
      <div className={LST + " flex flex-1 flex-col"}>
        <div className="flex h-[20px] items-center pl-[3px]">View:<span className="ml-1.5 text-[#aaa]">(</span></div>
        <div className="flex h-[20px] items-center border border-r-0 border-[#999] bg-white pl-px">Post-Ro</div>
        <div className="mt-[2px] flex flex-1 flex-col border border-r-0 border-[#828790] bg-white">
          <div className={HEAD + " h-[22px] border-b border-[#ddd] pl-[3px]"}>Hierar</div>
          <svg width="37" height="58" viewBox="0 0 37 58" fill="none"><path d="M10.500 0v22M11 7.500h10M16 24.500h6M29.500 32v20" stroke="#999" strokeDasharray="1 1" /><path d="M6.500 19.500h8v8h-8zM26.500 35.500h8v8h-8z" fill="#fff" stroke="#888" /><path d="M8 23.500h5M28 39.500h5" stroke="#3057a8" /><path d="M25 2h12v10H27z" fill="#9cc8f0" stroke="#2a6db5" /><path d="M29 5h5v4h-5z" fill="#fff" stroke="#223c7a" /><path d="M27 19h10v9H27z" fill="#fff" stroke="#222" strokeWidth="2" strokeDasharray="2 1" /></svg>
          <div className="mt-auto flex h-[15px] items-center bg-[#ececec] pl-[5px]"><Tri d="l" /><div className="ml-[7px] h-[14px] w-6 border border-[#979797] bg-linear-to-b from-[#f5f5f5] to-[#d4d4d6]" /></div>
        </div>
      </div>
    </div>
    <div className="mt-[3px] flex flex-1">
      <div className="flex w-[27px] shrink-0 flex-col items-center border-r border-[#999] pt-[5px]"><Strip items={["play", "-", "c0", "c1", "-", "c2", "-", "tbl"]} /></div>
      <div className={LST + " flex flex-1 flex-col"}>
        <div className="flex h-[29px] items-center pl-[5px]"><Mini k="re" /><span className="ml-[6px] text-[#1f3d73]">N</span></div>
        <div className="flex flex-1 flex-col border border-r-0 border-[#828790] bg-white">
          <div className={HEAD + " h-[22px] border-b border-[#ddd] pl-[3px]"}>Proces</div>
          <svg width="37" height="46" viewBox="0 0 37 46" fill="none"><path d="M16 9.500h6M30.500 18v24h7M30 26.500h7" stroke="#999" strokeDasharray="1 1" /><path d="M6.500 5.500h8v8h-8z" fill="#fff" stroke="#888" /><path d="M8 9.500h5" stroke="#3057a8" /><path d="M24 4l6 6M34 3l-8 12" stroke="#444" strokeWidth="2.500" /><path d="M26 12l11-4v8H26z" fill="#d9512c" /></svg>
        </div>
      </div>
    </div>
    <div className={SEG + " ml-[3px] flex h-[21px] shrink-0 items-center border-l border-t-2 border-[#999] bg-[#d9d9d9] pl-[3px]"}><I n="chev" s={14} /><div className="ml-[9px]">Start</div></div>
  </div>
);

/* ---------- Paint ribbon ---------- */
const Lbl = ({ children }) => <div className={SEG + " absolute inset-x-0 bottom-[3px] text-center text-[#7389a8]"}>{children}</div>;
const Group = ({ w, label, children, cls = "" }) => (
  <div className="flex h-[91px] shrink-0" style={{ width: w }}>
    <div className={"relative flex flex-1 pt-[4px] " + cls}>{children}{label && <Lbl>{label}</Lbl>}</div>
    <div className="mt-[6px] h-[77px] w-px bg-[#a9bdd6] shadow-[1px_0_0_#f4f8fd]" />
  </div>
);
const Arr = ({ c = "#3b5068", cls = "" }) => <Tri d="d" c={c} s={4} cls={cls} />;
const RIcon = ({ k, s = 16 }) => (
  <svg width={s} height={s} viewBox="0 0 16 16" fill="none" className="shrink-0">
    {k === "cut" && <g stroke="#9aa6b6" strokeWidth="1.500"><path d="M5 0l5 10M11 0L6 10" /><circle cx="5" cy="12.500" r="2" /><circle cx="11" cy="12.500" r="2" /></g>}
    {k === "copy" && <g stroke="#9fb0c6" fill="#eef3fa"><path d="M1.500 1.500h7v9h-7zM6.500 5.500h8v10h-8z" /><path d="M8 8h5M8 10.500h5M8 13h5" /></g>}
    {k === "crop" && <path d="M4 1v11h11M1 4h11v11M4 12L13 2" stroke="#8c9cb2" />}
    {k === "resize" && <g stroke="#2560a0"><path d="M6.500 1.500h8v8h-8z" fill="#fff" strokeWidth="1.500" /><path d="M1.500 9.500h5v5h-5z" fill="#cfe2f5" /></g>}
    {k === "rot" && <><path d="M9 4l6 11H9z" fill="#2b6cb0" /><path d="M7 7v8H1z" fill="#9fb8d3" /><path d="M2 5c0-3 3-4 6-3M6 0l2.500 2L6 4" stroke="#3a78c0" /></>}
    {k === "pencil" && <><path d="M1 15l1-4L11 1l3 3-9 9.500z" fill="#f1c84a" stroke="#8a5a20" strokeWidth=".8" /><path d="M11 1l3 3 1-1.500L12.500 0z" fill="#cc4b4b" /><path d="M1 15l1-3 2 2z" fill="#333" /></>}
    {k === "fill" && <><path d="M8 2l6 6-6 6-6-6z" fill="#dfe8f2" stroke="#607890" /><path d="M4 0l5 7" stroke="#8a4a20" strokeWidth="1.500" /><path d="M2 8c-2 1-2 4-1 6 2-1 2-3 3-5z" fill="#e8562c" /><path d="M4 9h9l-5 5z" fill="#2f8be0" /></>}
    {k === "A" && <text x="8" y="14.500" textAnchor="middle" fontSize="18" fontWeight="bold" fontFamily="Liberation Serif" fill="#1d3f66">A</text>}
    {k === "eraser" && <><path d="M6 2h9l-6 12H1z" fill="#f28a86" stroke="#b04a48" strokeWidth=".8" /><path d="M1 11h8l-.5 3.500H1z" fill="#fbd0ce" stroke="#b04a48" strokeWidth=".6" /></>}
    {k === "pick" && <><path d="M1 15l1-3 6-7 3 3-7 6z" fill="#dcebf8" stroke="#5a7896" /><path d="M8 3l5 5M10 5l3-4 2.500 2.500L12 7z" stroke="#1d4f9c" strokeWidth="2" fill="#1d4f9c" /></>}
    {k === "mag" && <><path d="M10 10l5 5.500" stroke="#b08a50" strokeWidth="2.500" /><circle cx="6.500" cy="6.500" r="5.500" fill="#e4f0fc" stroke="#8ba0b8" strokeWidth="1.500" /></>}
    {k === "outl" && <path d="M2 3h9M2 3v11h10V9M6 11l7-10 2 2-7 9z" stroke="#9aa9bd" />}
    {k === "rell" && <><path d="M8 1l6 6-6 5-6-5z" fill="#cdd7e4" stroke="#98a7bb" /><path d="M0 12h16v3H0z" fill="#a9b9cc" /></>}
  </svg>
);
const RItem = ({ k, t, off, arrow }) => (
  <div className={RIB + " flex h-[22px] items-center gap-[3px] " + (off ? "text-[#9aa1ab]" : "text-[#1e395b]")}><RIcon k={k} />{t}{arrow && <Arr c={off ? "#9aa1ab" : "#3b5068"} />}</div>
);
const shapes = [
  "M2 2l12 12", "M1 13C4 0 6 2 8 8s4 4 7-6", "M8 1.500a6.500 6.500 0 1 0 .01 0z", "M2 2h12v12H2z", "M4 2h8q2 0 2 2v8q0 2-2 2H4q-2 0-2-2V4q0-2 2-2z", "M4 2h8l-3 5h5v7H1z", "M8 2l6.500 12h-13z",
  "M2 1l13 14H2z", "M8 1l6 7-6 7-6-7z", "M8 1l7 5-2.500 8h-9L1 6z", "M8 1l6 3.500v7L8 15l-6-3.500v-7z", "M1 5h7V1l7 7-7 7v-4H1z", "M15 5H8V1L1 8l7 7v-4h7z", "M5 15V8H1l7-7 7 7h-4v7z",
  "M5 1v7H1l7 7 7-7h-4V1z", "M8 1l1.500 5.500L15 8 9.500 9.500 8 15 6.500 9.500 1 8l5.500-1.500z", "M8 1l2 5h5l-4 3.500 1.500 5.500L8 12l-4.500 3L5 9.500 1 6h5z", "M8 1l2.200 3.500H14L12 8l2 3.500h-3.800L8 15l-2.200-3.500H2L4 8 2 4.500h3.800z",
  "M3 2h10q2 0 2 2v6q0 2-2 2H7l-3 3v-3H3q-2 0-2-2V4q0-2 2-2z", "M8 2c9 0 9 9 1 9L4 15v-4.500C-1 8 1 2 8 2z", "M4 3c1-2 4-2 5-1 2-1 4 0 4 2 2 1 2 4 0 5 0 3-3 3-4 2-2 2-5 1-5-1-3 0-4-4-1-5 0-1 0-2 1-2z",
];
const palette = [
  ["#000", "#7f7f7f", "#880015", "#ed1c24", "#ff7f27", "#fff200", "#22b14c", "#00a2e8", "#3f48cc", "#a349a4"],
  ["#fff", "#c3c3c3", "#b97a57", "#ffaec9", "#ffc90e", "#efe4b0", "#b5e61d", "#99d9ea", "#7092be", "#c8bfe7"],
  Array(10).fill("transparent"),
];

const Paint = () => (
  <div className="flex h-[138px] shrink-0 flex-col bg-[#dfe9f5]">
    <div className="flex h-[22px] shrink-0 items-center border-b border-[#2c3846] bg-[linear-gradient(90deg,#a4b8cc_0px,#b2c3d4_260px,#8b9bae_300px,#7e8ea2_640px,#5e7389_760px,#4b6179_1020px,#5f7790_1366px)]">
      <I n="palette" c="ml-px" />
      <div className="ml-[7px] h-3 w-px bg-[#5c6d80]" />
      <I n="save" s={15} c="ml-[9px]" /><I n="undo" c="ml-[6px]" /><I n="redo" s={15} c="ml-[6px] opacity-70" /><Tri d="d" c="#111" s={6} cls="ml-[8px]" />
      <div className="ml-[9px] h-3 w-px bg-[#5c6d80]" />
      <div className={SEG + " ml-[5px]"}>temporal principio - Paint</div>
      <Caption w1={28} w2={27} w3={46} />
      <div className="w-1" />
    </div>
    <div className="flex h-[24px] shrink-0 items-end border-b border-[#b9c9de]">
      <div className="mb-px flex h-[22px] w-[56px] items-center justify-center gap-1.5 bg-linear-to-b from-[#3f7cc4] from-45% to-[#12418c] to-50%">
        <svg width="14" height="12" viewBox="0 0 14 12"><path d="M0 0h14v12H0z" fill="#fff" /><path d="M6.500 1v10M8 3h5M8 6h5M8 9h5" stroke="#2c5f9f" /></svg><Tri d="d" c="#fff" s={5} />
      </div>
      <div className={SEG + " ml-[3px] flex h-[22px] w-[51px] items-center justify-center rounded-t-[3px] border border-b-0 border-[#b9c9de] bg-[#f5f9fe] text-[#1e395b]"}>Inicio</div>
      <div className={SEG + " flex h-[22px] items-center pl-4 text-[#1e395b]"}>Ver</div>
      <div className="mb-[5px] ml-auto mr-1 flex h-[14px] w-[14px] items-center justify-center rounded-full bg-[#2a63cf] text-[11px] font-bold leading-none text-white">?</div>
    </div>
    <div className="flex h-[92px] shrink-0 border-b border-[#aab8cc] bg-linear-to-b from-[#f3f8fd] via-[#e2ebf6] to-[#dae5f3]">
      <Group w={114} label="Portapapeles">
        <div className={SEG + " ml-[6px] flex w-[42px] flex-col items-center pt-[3px] text-[#1e395b]"}>
          <svg width="26" height="31" viewBox="0 0 26 31"><path d="M1 3h24v27H1z" fill="#c08a45" stroke="#855a22" rx="2" /><path d="M4 6h18v21H4z" fill="#fdfdfd" /><path d="M8 1h10v5H8z" fill="#9aa0a8" stroke="#666" /><path d="M6 10h14M6 13h14M6 16h14M6 19h14M6 22h14" stroke="#c5ccd6" /></svg>
          <div className="mt-[6px]">Pegar</div><Arr cls="mt-[4px]" />
        </div>
        <div className="ml-[2px] flex flex-col"><RItem k="cut" t="Cortar" off /><RItem k="copy" t="Copiar" off /></div>
      </Group>
      <Group w={184} label="Imagen">
        <div className={SEG + " ml-[5px] flex h-[66px] w-[63px] shrink-0 flex-col items-center rounded-[2px] border border-[#c29b3c] bg-linear-to-b from-[#fddfa0] from-35% to-[#fdbf51] to-56% text-[#1e395b]"}>
          <svg width="32" height="26" viewBox="0 0 32 26" className="mt-[5px]"><path d="M1 1h30v24H1z" fill="none" stroke="#20639f" strokeDasharray="2 1" strokeWidth="1.300" /></svg>
          <div className="mt-[5px] h-px w-full bg-[#d9a441]" /><div className="mt-[2px] text-[11.500px] tracking-[-0.65px]">Seleccionar</div><Arr cls="mt-[4px]" />
        </div>
        <div className="ml-[4px] flex flex-col"><RItem k="crop" t="Recortar" off /><RItem k="resize" t="Cambiar tamaño" /><RItem k="rot" t="Girar" arrow /></div>
      </Group>
      <Group w={80} label="Herramientas" cls="flex-col">
        {[["pencil", "fill", "A"], ["eraser", "pick", "mag"]].map((r, i) => (
          <div key={i} className={"ml-[5px] flex h-[22px] w-[69px] rounded-[2px] border border-[#b3c4db] bg-[#f4f8fd] " + (i ? "mt-[7px]" : "mt-[8px]")}>
            {r.map((k) => <div key={k} className="flex flex-1 items-center justify-center border-r border-[#d3deec] last:border-0"><RIcon k={k} /></div>)}
          </div>
        ))}
      </Group>
      <Group w={57} cls={"flex-col items-center text-[#1e395b] " + RIB}>
        <svg width="32" height="32" viewBox="0 0 32 32" className="mt-[3px]"><path d="M.5.5h31v31H.5z" fill="#fdfdfd" stroke="#9aa" /><path d="M4 24C0 12 8 6 16 8c-9 1-10 8-3 12l-1 6z" fill="#e8481c" /><path d="M28 1l2 2-7 14-4-3z" fill="#8fa7bf" /><path d="M19 14l5 4c0 6-5 9-10 9 3-4 1-9 5-13z" fill="#8a5a30" /></svg>
        <div className="mt-[5px]">Pinceles</div><Arr cls="mt-[4px]" />
      </Group>
      <Group w={257} label="Formas">
        <div className="ml-[6px] mt-[3px] flex h-[60px] w-[157px] shrink-0 border border-[#b3c4db] bg-[#f4f9fe]">
          <div className="grid w-[142px] grid-cols-7">
            {shapes.map((d, i) => <div key={i} className="flex items-center justify-center"><svg width="17" height="17" viewBox="0 0 16 16"><path d={d} fill="#f7fbff" stroke="#2a68a5" strokeWidth="1.300" /></svg></div>)}
          </div>
          <div className="flex flex-1 flex-col items-center justify-around border-l border-[#c5d3e5] bg-[#eaf1f9]"><Tri d="u" c="#a5b3c6" s={4} /><Tri d="d" c="#2c4a70" s={4} /><Tri d="d" c="#2c4a70" s={4} /></div>
        </div>
        <div className="ml-[4px] flex flex-col"><RItem k="outl" t="Contorno" off arrow /><RItem k="rell" t="Rellenar" off arrow /></div>
      </Group>
      <Group w={56} cls={"flex-col items-center text-[#9aa1ab] " + RIB}>
        <svg width="32" height="30" viewBox="0 0 32 30" className="mt-[3px]" fill="#7d90b3"><path d="M0 1h32v1H0zM0 6h32v2H0zM0 13h32v4H0zM0 21h32v7H0z" /></svg>
        <div className="mt-[7px]">Tamaño</div><Arr c="#9aa1ab" cls="mt-[4px]" />
      </Group>
      <Group w={356} label="Colores" cls={RIB + " text-[#1e395b]"}>
        <div className="ml-[5px] flex h-[66px] w-[42px] flex-col items-center rounded-[2px] border border-[#c29b3c] bg-linear-to-b from-[#fddfa0] from-35% to-[#fdbf51] to-56%">
          <div className="mt-[2px] h-[32px] w-[32px] border border-[#888] bg-[#ddd] p-px"><div className="h-full bg-black" /></div>
          <div className="mt-[5px]">Color</div><div className="mt-[1px]">1</div>
        </div>
        <div className="flex w-[41px] flex-col items-center">
          <div className="mt-[7px] h-[24px] w-[24px] border border-[#888] bg-white" />
          <div className="mt-[9px]">Color</div><div className="mt-[1px]">2</div>
        </div>
        <div className="ml-[2px] mt-[1px] grid h-[64px] grid-cols-10 gap-[2px]">
          {palette.flat().map((c, i) => (
            <div key={i} className={"h-[20px] w-[20px] border border-[#a0a0a0] p-px " + (i < 20 ? "bg-white" : "")}><div className="h-full" style={{ background: c }} /></div>
          ))}
        </div>
        <div className="flex w-[44px] flex-col items-center pt-[4px] leading-[13px]">
          <div className="h-[29px] w-[29px] rounded-[2px] border border-[#aaa] bg-[#eee] p-[2px]"><div className="h-full bg-[linear-gradient(to_bottom,transparent,#8080807f),linear-gradient(90deg,red,#ff0,lime,cyan,blue,#f0f,red)]" /></div>
          <div className="mt-[5px] text-center">Editar<br />colores</div>
        </div>
      </Group>
    </div>
  </div>
);

/* ---------- taskbar ---------- */
const T = ({ children }) => <svg width="17" height="17" viewBox="0 0 20 20" fill="none">{children}</svg>;
const taskIcons = [
  <T><path d="M2 1h16v18H2z" fill="#12264a" stroke="#c79b3b" /><path d="M7 3v12h7v-3" stroke="#f0c64a" strokeWidth="3" /></T>,
  <T><path d="M2 2h16v16H2z" fill="#8a6a2c" stroke="#d8a848" strokeWidth="2" /><circle cx="10" cy="10" r="6" fill="#1f5cc0" stroke="#7fd0ff" /><path d="M10 7a3 3 0 1 1-3 3" stroke="#bff" strokeWidth="1.500" /></T>,
  <T><path d="M10 1l3 4h5l-2 5 2 5h-5l-3 4-3-4H2l2-5-2-5h5z" fill="#6b4322" /><path d="M7 5h3q4 1 4 5t-4 5H7z" fill="#2a1508" stroke="#f0cfa0" strokeWidth="1.600" /></T>,
  <T><path d="M10 1l8 3-1 10-7 5-7-5L2 4z" fill="#6f7fa6" stroke="#c2cbe0" /><path d="M10 8l8-4M10 8v11M10 8L2 4" stroke="#e4eaf6" /></T>,
  <T><circle cx="10" cy="10" r="9" fill="#1792d6" /><path d="M4 8c3-3 5 0 12-2M4 13c3-3 5 0 12-2" stroke="#fff" strokeWidth="2" /></T>,
  <T><circle cx="14" cy="6" r="4" stroke="#e8edf3" strokeWidth="2.500" /><circle cx="6" cy="14" r="3.500" fill="#dfe6ee" /><path d="M6 14l7-6" stroke="#dfe6ee" strokeWidth="3" /></T>,
  <T><path d="M1 10l5-6 11-3-2 7 1 4 1 7-11-3z" fill="#f4f4f4" /><path d="M6 10h6l4-6M12 10l3 6" stroke="#222" strokeWidth="2" /></T>,
  <T><path d="M10 1l7 3v11l-7 4-7-4V4z" fill="#a9cdea" /><path d="M10 8l7-4-7-3-7 3z" fill="#e9f5ff" /><path d="M10 8v11l-7-4V4z" fill="#cfe6f8" /></T>,
  <T><path d="M1 1l6 1 3 9 9-1v5L7 19z" fill="#1485ff" /></T>,
  <T><path d="M2 1h16v18H2z" fill="#4c4a78" /><path d="M3 4h14M3 8h9M3 12h14M5 16h3M12 14v4M15 13v5" stroke="#b6b4dc" strokeWidth="1.500" /></T>,
  <T><path d="M1 1h18v4H1z" fill="#0a0af0" stroke="#eee" strokeWidth=".6" /><path d="M2 7h16v12H2z" fill="#111" /><path d="M4 18V8l6 6 6-6v10" stroke="#fff" strokeWidth="2" /></T>,
  <T><path d="M14 1l4 2v14l-4 2-8-7-3 2V6l3 2z" fill="#8a3fae" stroke="#e3c4f2" strokeWidth=".8" /><path d="M14 6v8l-5-4z" fill="#1d1030" /></T>,
  <T><circle cx="10" cy="10" r="9" fill="#f4f2f8" /><path d="M5 5l2 1h6l2-1v7q-5 5-10 0z" fill="#4d2c7a" /></T>,
  <T><circle cx="10" cy="10" r="9" fill="#7d7fc4" /><path d="M13 4c-9 0-7 4-3 5-6 1-6 6 3 6" stroke="#fff" strokeWidth="2" /></T>,
  <T><path d="M1 3h18v4H1zM7 9h5v3H7zM7 14h5v4H7z" fill="#6c70f0" /></T>,
  <T><path d="M3 6h9V3l2 2 2-2 1 5v9H5l-2-3z" fill="#b5703c" stroke="#4a2a14" /><path d="M13 12h3v4h-3z" fill="#eee" /></T>,
];
const TB = ({ w, children, lit }) => <div style={{ width: w }} className={"flex h-[28px] shrink-0 items-center justify-center rounded-[2px] border border-white/50 " + (lit ? "bg-linear-to-b from-white/60 to-white/40" : "bg-linear-to-b from-white/35 to-white/15")}>{children}</div>;
const Taskbar = () => (
  <div className="flex h-[30px] shrink-0 items-center border-t border-[#6e8294] bg-[linear-gradient(90deg,#24415a_0px,#15293e_130px,#0d1b2c_500px,#1c3d52_720px,#070d18_800px,#0a1424_900px,#25503f_960px,#1d5c4c_1000px,#4d7060_1050px,#97a483_1080px,#a3a98b_1140px,#742a3c_1166px,#7f5c55_1185px,#6b2236_1220px,#8f9f80_1260px,#65303a_1300px,#4a2a30_1366px)]">
    <div className="ml-[9px] mt-[1px] flex h-[29px] w-[38px] items-start justify-center overflow-visible">
      <svg width="38" height="34" viewBox="0 0 38 34" className="-mt-[5px]"><circle cx="19" cy="18" r="17.500" fill="#2f76ab" stroke="#9cc5e0" /><path d="M3 14a17 17 0 0 1 32 0q-16 8-32 0z" fill="#a9cbe3" opacity=".6" /><path d="M11 10q4-2 7 0l-2 7q-3-2-7 0z" fill="#ee5a24" /><path d="M20 11q4 2 7 0l-2 7q-4 1-7-1z" fill="#86bf2e" /><path d="M9 19q4-2 7 0l-2 7q-3-2-7 0z" fill="#3f9ff0" /><path d="M18 20q4 2 7 0l-2 7q-4 1-7-1z" fill="#fbc81e" /></svg>
    </div>
    <div className="ml-[13px] flex"><TB w={38}><T><path d="M2 3h6l1 2h9v13H2z" fill="#f3d67a" stroke="#b8963c" /><path d="M4 12h12v6h-3v-3H7v3H4z" fill="#4fa8dc" /></T></TB><div className="mr-[4px] h-[28px] w-[4px] rounded-r border border-l-0 border-white/40" /></div>
    <TB w={42}><T><circle cx="10" cy="10" r="8.500" fill="#e66a12" /><path d="M6 6q4-4 9-1-1 6-5 8-5-1-4-7z" fill="#234f9e" /><path d="M2 7q1 6 6 8 5 1 9-3-2 7-8 7T2 7z" fill="#f6a21a" /></T></TB>
    <div className="ml-[2px] flex">{taskIcons.map((t, i) => <div key={i} className="flex w-[46px] justify-center">{t}</div>)}</div>
    <div className="ml-[2px] flex gap-[4px]"><TB w={42}><I n="chev" s={16} /></TB><TB w={42} lit><I n="isimBig" s={17} /></TB><TB w={42}><I n="palette" s={16} /></TB></div>
    <div className={SEG + " ml-auto flex items-center text-white"}>
      <div className="mb-[5px] w-[29px]">ES</div><Tri d="u" c="#fff" s={5} cls="mr-[12px]" />
      <svg width="64" height="16" viewBox="0 0 64 16" fill="none" className="mr-[31px]">
        <path d="M2 3h7v11H2zM4 1h3" stroke="#fff" strokeWidth="1.700" /><path d="M9 6h6v4H9zM10 3v3M14 3v3M12 10v5" stroke="#fff" strokeWidth="1.500" fill="#fff" />
        <path d="M26 14v-3M29.500 14V9M33 14V7M36.500 14V4M40 14V1" stroke="#fff" strokeWidth="2" />
        <path d="M50 5h3l4-4v14l-4-4h-3z" fill="#fff" /><path d="M59 5q2 3 0 6M61.500 3q3.500 5 0 10" stroke="#fff" />
      </svg>
      <div className="mr-[29px]">13:46</div>
    </div>
    <div className="h-full w-[13px] border-l border-white/40 bg-white/15" />
  </div>
);

const st = "flex h-full items-center border-r border-[#cfcfd4]";
const IconStat = ({ k }) => (
  <svg width="14" height="14" viewBox="0 0 14 14" fill="none" stroke="#223f63">
    {k === 0 && <path d="M7 1v12M1 7h12M5 3l2-2 2 2M5 11l2 2 2-2M3 5L1 7l2 2M11 5l2 2-2 2" />}
    {k === 1 && <><path d="M4.500 2.500h8v7h-8z" strokeDasharray="1.500 1" /><path d="M2 1v9M.5 3L2 1l1.500 2M4 12.500h9M11 11l2 1.500-2 1.500" /></>}
    {k === 2 && <><path d="M4.500 2.500h8v7h-8z" strokeWidth="1.400" /><path d="M2 1v9M.5 3L2 1l1.500 2M4 12.500h9M11 11l2 1.500-2 1.500" /></>}
    {k === 3 && <path d="M1.500 1.500h11v11h-11zM4.500 1.500v5h5v-5M4.500 12.500v-4h5v4" strokeWidth="1.300" />}
  </svg>
);
const Status = () => (
  <div className={RIB + " flex h-[26px] shrink-0 items-center border-t border-[#999] bg-[#f0eded] text-[#1e1e1e]"}>
    <div className={st + " w-[156px] pl-[3px]"}><IconStat k={0} /></div>
    <div className={st + " w-[156px] pl-[5px]"}><IconStat k={1} /></div>
    <div className={st + " w-[156px] gap-[5px] pl-[5px]"}><IconStat k={2} />2646 × 768píxeles</div>
    <div className={st + " w-[156px] gap-[5px] pl-[6px]"}><IconStat k={3} />Tamaño: 315,6KB</div>
    <div className={st + " flex-1"} />
    <div className="flex w-[198px] items-center pl-[21px]">
      <div className="w-[36px]">100%</div>
      <svg width="140" height="18" viewBox="0 0 140 18" fill="none"><circle cx="8" cy="9" r="7" fill="#f6f6f6" stroke="#777" /><path d="M4.500 9h7" stroke="#444" strokeWidth="1.500" /><path d="M26 8.500h84" stroke="#aaa" strokeWidth="2" /><path d="M65.500 1.500h8v10l-4 4-4-4z" fill="#f4f4f4" stroke="#777" /><circle cx="130" cy="9" r="7" fill="#f6f6f6" stroke="#777" /><path d="M126.500 9h7M130 5.500v7" stroke="#444" strokeWidth="1.500" /></svg>
    </div>
  </div>
);

export default function App() {
  return (
    <div className="flex h-[768px] w-[2646px] overflow-hidden bg-black">
      <div className="w-[1280px] shrink-0"><ISim w={waves.a} /></div>
      <div className="flex w-[1366px] shrink-0 flex-col">
        <Paint />
        <div className="flex h-[557px] shrink-0 bg-[#c9d3e4]">
          <div className="flex h-[552px] w-[1349px] shrink-0 self-end overflow-hidden pl-[5px]"><ISim w={waves.b} /><ISE /></div>
          <div className="flex w-[17px] flex-col items-center bg-linear-to-r from-[#ececec] to-[#f6f6f6]">
            <div className="flex h-[18px] items-center"><Tri d="u" c="#333" s={6} /></div>
            <div className="flex h-[370px] w-[15px] flex-col items-center justify-center gap-px rounded-[2px] border border-[#979797] bg-linear-to-r from-[#f5f5f5] from-50% to-[#cfcfd2] to-50%">
              {[0, 1, 2].map((i) => <div key={i} className="my-[0.5px] h-[1.500px] w-[7px] bg-[#777]" />)}
            </div>
            <Tri d="d" c="#333" s={6} cls="mb-[5px] mt-auto" />
          </div>
        </div>
        <div className="flex h-[17px] shrink-0 bg-[#f0f0f0]"><HScroll lead={1} w={666} grip cls="w-[1349px]" /></div>
        <Status />
        <Taskbar />
      </div>
    </div>
  );
}
